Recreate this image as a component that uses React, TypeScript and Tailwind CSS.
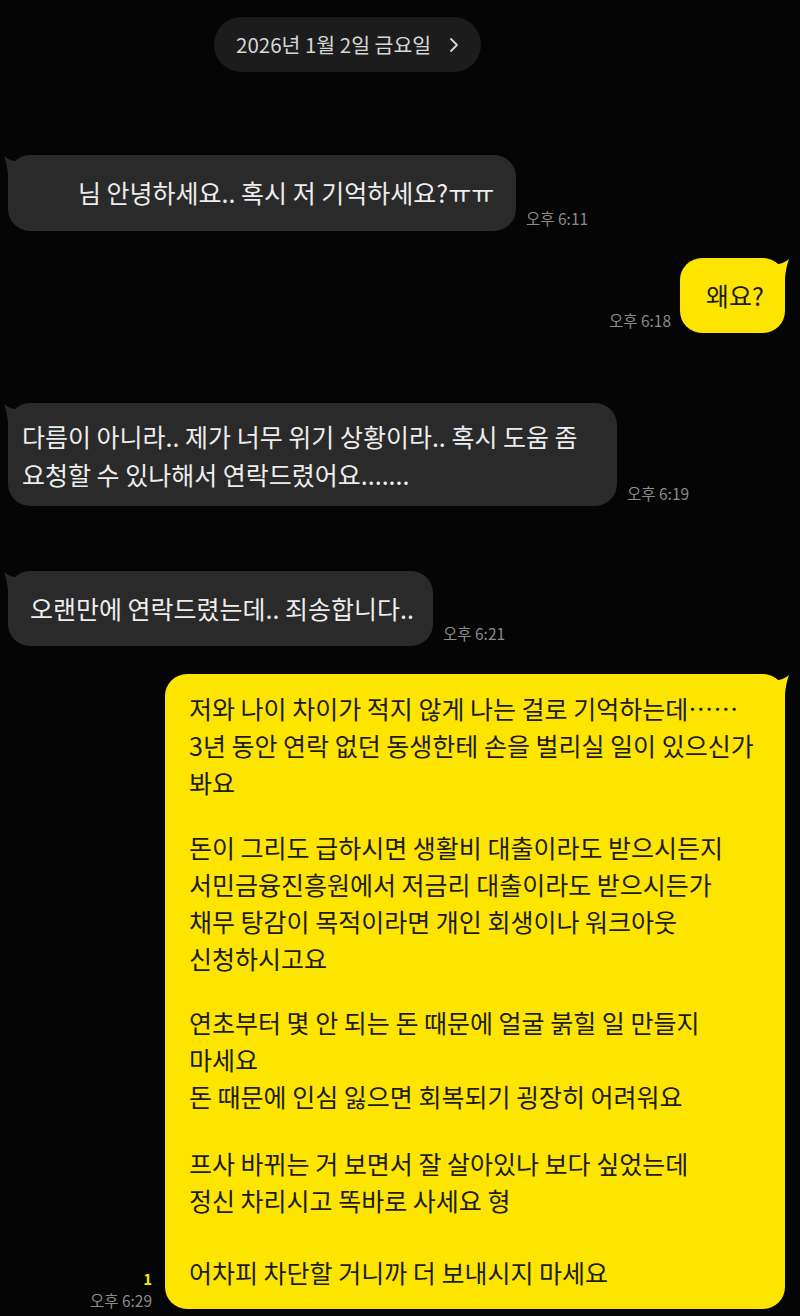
const font = "font-['Noto_Sans_CJK_KR','Noto_Sans',sans-serif]";

function Ear({ side, color }: { side: "left" | "right"; color: string }) {
  return (
    <svg
      width="26"
      height="24"
      viewBox="0 0 26 24"
      className={
        side === "left"
          ? "absolute -left-[5px] -top-[1px]"
          : "absolute -right-[5px] -top-[1px] -scale-x-100"
      }
    >
      <path d="M1 2 Q7 7 13 7 Q19 7 25 1 L25 23 L5 23 L5 21 Q4 10 1 2 Z" fill={color} />
    </svg>
  );
}

function Time({ children }: { children: string }) {
  return <span className="text-[15.5px] leading-[18px] text-[#8b8b8b] whitespace-nowrap">{children}</span>;
}

const bigLines: string[][] = [
  [
    "저와 나이 차이가 적지 않게 나는 걸로 기억하는데……",
    "3년 동안 연락 없던 동생한테 손을 벌리실 일이 있으신가",
    "봐요",
  ],
  [
    "돈이 그리도 급하시면 생활비 대출이라도 받으시든지",
    "서민금융진흥원에서 저금리 대출이라도 받으시든가",
    "채무 탕감이 목적이라면 개인 회생이나 워크아웃",
    "신청하시고요",
  ],
  [
    "연초부터 몇 안 되는 돈 때문에 얼굴 붉힐 일 만들지",
    "마세요",
    "돈 때문에 인심 잃으면 회복되기 굉장히 어려워요",
  ],
  ["프사 바뀌는 거 보면서 잘 살아있나 보다 싶었는데", "정신 차리시고 똑바로 사세요 형"],
  ["어차피 차단할 거니까 더 보내시지 마세요"],
];

const paraGaps = ["mt-0", "mt-[28px]", "mt-[27px]", "mt-[30px]", "mt-[35px]"];

export default function App() {
  return (
    <div className={`${font} w-[800px] h-[1316px] bg-[#050505] overflow-hidden flex flex-col`}>
      {/* date pill */}
      <div className="mt-[17px] ml-[214px] w-[267px] h-[55px] rounded-full bg-[#1c1c1c] flex items-center pl-[22px] gap-[18px]">
        <span className="text-[20.5px] text-[#d6d6d6] whitespace-nowrap">2026년 1월 2일 금요일</span>
        <svg width="10" height="16" viewBox="0 0 10 16">
          <polyline points="2,2 8,8 2,14" fill="none" stroke="#d6d6d6" strokeWidth="1.8" strokeLinecap="round" strokeLinejoin="round" />
        </svg>
      </div>

      {/* 6:11 */}
      <div className="mt-[83px] ml-[8px] flex items-end gap-[10px]">
        <div className="relative w-[508px] h-[76px] rounded-[22px] bg-[#2a2a2a] flex items-center pl-[70px]">
          <Ear side="left" color="#2a2a2a" />
          <span className="text-[25px] text-[#ededed] whitespace-nowrap">님 안녕하세요.. 혹시 저 기억하세요?ㅠㅠ</span>
        </div>
        <div className="mb-[1px]">
          <Time>오후 6:11</Time>
        </div>
      </div>

      {/* 6:18 */}
      <div className="mt-[27px] mr-[15px] flex items-end justify-end gap-[9px]">
        <div className="mb-[1px]">
          <Time>오후 6:18</Time>
        </div>
        <div className="relative w-[105px] h-[75px] rounded-[22px] bg-[#fee500] flex items-center pl-[26px]">
          <Ear side="right" color="#fee500" />
          <span className="text-[25px] text-[#1c1c1c] whitespace-nowrap">왜요?</span>
        </div>
      </div>

      {/* 6:19 */}
      <div className="mt-[70px] ml-[8px] flex items-end gap-[10px]">
        <div className="relative w-[609px] h-[103px] rounded-[22px] bg-[#2a2a2a] flex flex-col justify-center pl-[14px] text-[25px] leading-[38px] text-[#ededed]">
          <Ear side="left" color="#2a2a2a" />
          <span className="whitespace-nowrap">다름이 아니라.. 제가 너무 위기 상황이라.. 혹시 도움 좀</span>
          <span className="whitespace-nowrap">요청할 수 있나해서 연락드렸어요.......</span>
        </div>
        <div className="mb-[1px]">
          <Time>오후 6:19</Time>
        </div>
      </div>

      {/* 6:21 */}
      <div className="mt-[65px] ml-[8px] flex items-end gap-[10px]">
        <div className="relative w-[425px] h-[75px] rounded-[22px] bg-[#2a2a2a] flex items-center pl-[22px]">
          <Ear side="left" color="#2a2a2a" />
          <span className="text-[25px] text-[#ededed] whitespace-nowrap">오랜만에 연락드렸는데.. 죄송합니다..</span>
        </div>
        <div className="mb-[1px]">
          <Time>오후 6:21</Time>
        </div>
      </div>

      {/* 6:29 */}
      <div className="mt-[28px] mr-[15px] flex items-end justify-end gap-[13px]">
        <div className="flex flex-col items-end">
          <span className="text-[15px] leading-[20px] font-bold text-[#fee500] mb-[2px]">1</span>
          <Time>오후 6:29</Time>
        </div>
        <div className="relative w-[620px] rounded-[22px] bg-[#fee500] pl-[24px] pt-[16px] pb-[18px] text-[25px] leading-[37px] text-[#1c1c1c]">
          <Ear side="right" color="#fee500" />
          {bigLines.map((para, i) => (
            <div key={i} className={paraGaps[i]}>
              {para.map((line) => (
                <div key={line} className="whitespace-nowrap">
                  {line}
                </div>
              ))}
            </div>
          ))}
        </div>
      </div>
    </div>
  );
}
